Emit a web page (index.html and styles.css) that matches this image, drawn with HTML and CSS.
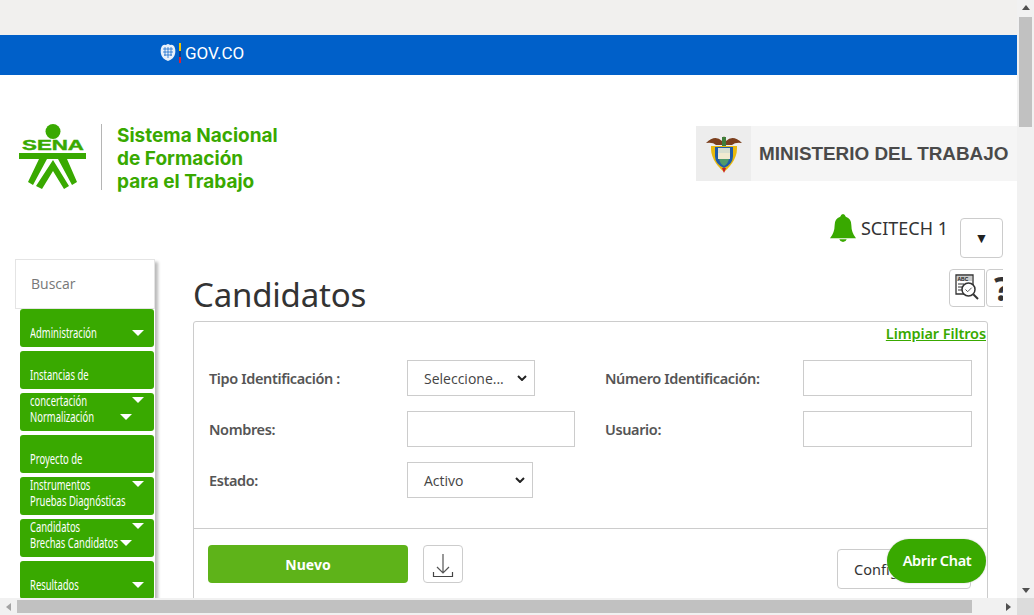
FILE: index.html
```html
<!DOCTYPE html>
<html lang="es">
<head>
<meta charset="utf-8">
<title>Candidatos</title>
<link rel="stylesheet" href="styles.css">
</head>
<body>
<div class="viewport">
  <div class="topstrip"></div>
  <header class="govbar">
    <svg class="shield" width="16" height="20" viewBox="0 0 16 20"><path d="M2 3q2-2 4-1 2-2 4 0 2-1 4 1 2 3 1 8-1 5-7 7-6-2-7-7-1-5 1-8z" fill="#e8f0fa"/><path d="M3 6h10M3 9h10M4 12h8M8 4v11M5 4v9M11 4v9" stroke="#0060c9" stroke-width=".7" fill="none"/></svg>
    <span class="flag"></span>
    <span class="govtext">GOV.CO</span>
  </header>
  <section class="brand">
    <div class="sena">
      <svg class="sena-logo" width="68" height="68" viewBox="0 0 68 68">
        <circle cx="34" cy="7.500" r="7.500" fill="#39a900"/>
        <text x="3" y="26" class="sena-word" textLength="62" lengthAdjust="spacingAndGlyphs">SENA</text>
        <rect x="0" y="29" width="67" height="6" fill="#39a900"/>
        <path d="M20 35h8L14 61l-5-3zM39 35h9l10 23-5 3zM34 36l16 26-5 3-11-18-11 18-6-3z" fill="#39a900"/>
      </svg>
      <span class="rule"></span>
      <div class="sena-name">Sistema Nacional<br>de Formación<br>para el Trabajo</div>
    </div>
    <div class="ministry">
      <span class="crest">
        <svg width="38" height="40" viewBox="0 0 38 40">
          <path d="M1 9Q10 0 17 7L19 2l2 5Q28 0 37 9q-7-1-10 2H11Q8 8 1 9z" fill="#7b3f1d"/>
          <path d="M17 3h4v9h-4z" fill="#3f7d3a"/>
          <path d="M6 12h26q1 14-13 26Q5 26 6 12z" fill="#e8b90c"/>
          <path d="M10 13h18v9q0 8-9 12-9-4-9-12z" fill="#1e5ba8"/>
          <path d="M13 14h12v5H13z" fill="#d8dfd0"/>
          <path d="M13 19h12v6H13z" fill="#f1ead0"/>
          <path d="M14 25h10q-1 5-5 7-4-2-5-7z" fill="#4f9a6a"/>
          <path d="M17 34h4l-2 5z" fill="#c81e2d"/>
        </svg>
      </span>
      <span class="ministry-name">MINISTERIO DEL TRABAJO</span>
    </div>
  </section>
  <div class="userbar">
    <svg class="bell" width="26" height="30" viewBox="0 0 28 30"><path d="M14 0q2 0 3 3 6 2 6 9 0 8 5 14H0q5-6 5-14 0-7 6-9 1-3 3-3zM10 27h8q-1 3-4 3t-4-3z" fill="#39a900"/></svg>
    <span class="username">SCITECH 1</span>
    <button class="caret-btn">▼</button>
  </div>
  <div class="main">
    <nav class="side">
      <div class="search">Buscar</div>
      <ul class="menu">
        <li class="item low"><span class="lab">Administración</span><i class="tri"></i></li>
        <li class="item low"><span class="lab">Instancias de</span></li>
        <li class="item two"><span class="lab">concertación<br>Normalización</span><i class="tri"></i><i class="tri second"></i></li>
        <li class="item low"><span class="lab">Proyecto de</span></li>
        <li class="item two"><span class="lab">Instrumentos<br>Pruebas Diagnósticas</span><i class="tri"></i></li>
        <li class="item two"><span class="lab">Candidatos<br>Brechas Candidatos</span><i class="tri"></i><i class="tri second"></i></li>
        <li class="item low"><span class="lab">Resultados</span><i class="tri"></i></li>
      </ul>
    </nav>
    <main class="content">
      <div class="titlerow">
        <h1>Candidatos</h1>
        <div class="tools">
          <button class="tool">
            <svg width="28" height="28" viewBox="0 0 28 28"><path d="M3 2h17v19H3z" fill="#fff" stroke="#333" stroke-width="1.300"/><path d="M4 3h15v5H4z" fill="#ccc"/><text x="4.500" y="8" class="abc">ABC</text><path d="M5 11h6M5 14h5M5 17h6" stroke="#333" stroke-width="1.200"/><circle cx="15.500" cy="16.500" r="6.500" fill="#fff" stroke="#333" stroke-width="1.500"/><path d="M12.500 16.500l2.200 2.200 4-4" fill="none" stroke="#555"/><path d="M20.500 21.500l4.500 4.500" stroke="#333" stroke-width="2"/></svg>
          </button>
          <button class="tool help"><span>?</span></button>
        </div>
      </div>
      <section class="panel">
        <a class="clear">Limpiar Filtros</a>
        <form class="filters">
          <label class="lbl">Tipo Identificación :</label>
          <div class="select w128"><span>Seleccione...</span><svg width="10" height="6" viewBox="0 0 10 6"><path d="M1 1l4 4 4-4" fill="none" stroke="#222" stroke-width="2"/></svg></div>
          <label class="lbl">Número Identificación:</label>
          <div class="input w169"></div>
          <label class="lbl">Nombres:</label>
          <div class="input w168"></div>
          <label class="lbl">Usuario:</label>
          <div class="input w169"></div>
          <label class="lbl">Estado:</label>
          <div class="select w126"><span>Activo</span><svg width="10" height="6" viewBox="0 0 10 6"><path d="M1 1l4 4 4-4" fill="none" stroke="#222" stroke-width="2"/></svg></div>
        </form>
        <div class="actions">
          <button class="nuevo">Nuevo</button>
          <button class="download">
            <svg width="22" height="26" viewBox="0 0 22 26"><path d="M11 1v19M5 14l6 6 6-6" fill="none" stroke="#555" stroke-width="1.200"/><path d="M1.500 19v4.500h19V19" fill="none" stroke="#444" stroke-width="1.200"/></svg>
          </button>
          <button class="config">Configurar</button>
        </div>
      </section>
    </main>
  </div>
  <button class="chat">Abrir Chat</button>
  <div class="vscroll">
    <svg class="arrow" width="8" height="5" viewBox="0 0 8 5"><path d="M0 5h8L4 0z" fill="#505050"/></svg>
    <span class="vthumb"></span>
    <svg class="arrow bottom" width="8" height="5" viewBox="0 0 8 5"><path d="M0 0h8L4 5z" fill="#505050"/></svg>
  </div>
  <div class="hscroll">
    <svg class="harrow" width="5" height="8" viewBox="0 0 5 8"><path d="M5 0v8L0 4z" fill="#a3a3a3"/></svg>
    <span class="hthumb"></span>
    <svg class="harrow" width="5" height="8" viewBox="0 0 5 8"><path d="M0 0v8l5-4z" fill="#505050"/></svg>
  </div>
  <div class="corner"></div>
</div>
</body>
</html>
```
FILE: styles.css
```css
* { box-sizing: border-box; }
html, body { margin: 0; height: 100%; overflow: hidden; background: #fff; }
.viewport { position: relative; width: 1034px; height: 615px; overflow: hidden; font-family: "Open Sans", "Noto Sans", sans-serif; color: #333; }
.topstrip { height: 35px; background: #f1f0ee; }
.govbar { height: 40px; background: #0060c9; display: flex; align-items: center; padding: 0 0 4px 160px; }
.shield { margin-right: 3px; }
.flag { width: 2px; height: 20px; margin-right: 4px; background: linear-gradient(#f4c400 0 40%, #0b3f8c 40% 70%, #d6213a 70%); }
.govtext { color: #fff; font: 400 17px "Roboto", sans-serif; }
.brand { height: 125px; padding: 49px 17px 0 19px; display: flex; justify-content: space-between; align-items: flex-start; }
.sena { display: flex; align-items: flex-start; }
.sena-word { font: 900 14px "Liberation Sans", sans-serif; fill: #39a900; stroke: #39a900; stroke-width: .4px; }
.rule { width: 1px; height: 66px; margin: 0 15px 0 14px; background: #b5b5b5; }
.sena-name { color: #39a900; font: 700 19px/23px "Inter", sans-serif; }
.ministry { width: 321px; height: 55px; margin-top: 2px; background: #f5f5f5; display: flex; align-items: center; }
.crest { width: 55px; height: 55px; background: #ededed; display: flex; align-items: center; justify-content: center; }
.ministry-name { margin-left: 8px; color: #4a4a4a; font: 700 18.900px "Liberation Sans", sans-serif; white-space: nowrap; }
.userbar { height: 59px; display: flex; align-items: flex-start; justify-content: flex-end; padding: 13px 31px 0 0; }
.bell { margin-right: 5px; }
.username { font: 400 18px/30px "Noto Sans", sans-serif; color: #333; }
.caret-btn { width: 43px; height: 40px; margin: 5px 0 0 12px; border: 1px solid #ccc; border-radius: 4px; background: #fff; font-size: 14px; color: #222; padding: 0; }
.main { display: flex; height: 356px; }
.side { width: 140px; margin-left: 15px; box-shadow: 3px 3px 3px #bbb; flex: none; }
.search { height: 50px; padding: 14px 0 0 15px; border: 1px solid #e4e4e4; font-size: 14px; color: #777; background: #fff; }
.menu { list-style: none; margin: 0 1px 0 5px; padding: 0; display: flex; flex-direction: column; gap: 4px; }
.item { position: relative; height: 38px; background: #39a900; border-radius: 3px; color: #fff; font: 400 15px/16px "Noto Sans", sans-serif; padding-left: 10px; }
.lab { display: block; white-space: nowrap; transform: scaleX(.63); transform-origin: left center; }
.low { padding-top: 15px; }
.two { overflow: hidden; }
.two .lab { margin-top: -1px; }
.tri { position: absolute; right: 10px; top: 21px; border: 6px solid transparent; border-top: 6px solid #fff; border-bottom: 0; }
.two .tri { top: 4px; }
.two .tri.second { top: 21px; right: 22px; }
.content { width: 794px; margin-left: 38px; flex: none; }
.titlerow { height: 62px; display: flex; justify-content: space-between; position: relative; }
h1 { margin: 0; padding-top: 14px; font: 400 33px/44px "Noto Sans", sans-serif; letter-spacing: -.2px; color: #333; }
.tools { display: flex; position: absolute; left: 756px; top: 10px; width: 54px; height: 38px; overflow: hidden; }
.tool { flex: none; width: 36px; height: 38px; background: #fff; border: 1px solid #ccc; border-radius: 4px 0 0 4px; padding: 2px; }
.help { width: 40px; margin-left: 1px; font: 700 34px/34px "Noto Sans", sans-serif; color: #333; text-align: left; padding: 0 0 0 7px; border-radius: 4px; }
.panel { position: relative; width: 795px; height: 290px; border: 1px solid #ccc; border-radius: 3px 3px 0 0; }
.clear { position: absolute; right: 1px; top: 1px; color: #39a900; font: 600 14.500px "Noto Sans", sans-serif; letter-spacing: -.1px; text-decoration: underline; }
.filters { display: grid; grid-template-columns: 198px 198px 198px 1fr; grid-auto-rows: 36px; row-gap: 15px; height: 207px; padding: 38px 0 0 15px; border-bottom: 1px solid #ccc; align-items: center; }
.lbl { font: 600 14.500px "Noto Sans", sans-serif; letter-spacing: -.38px; color: #555; }
.select, .input { height: 36px; background: #fff; border: 1px solid #ccc; }
.select { display: flex; align-items: center; justify-content: space-between; padding: 0 7px 0 16px; font-size: 14px; color: #444; }
.w128 { width: 128px; } .w126 { width: 126px; } .w168 { width: 168px; } .w169 { width: 169px; }
.actions { display: flex; align-items: flex-start; padding: 16px 0 0 14px; }
.nuevo { width: 200px; height: 38px; background: #5eb319; color: #fff; border: 0; border-radius: 4px; font: 700 14px "Noto Sans", sans-serif; }
.download { width: 40px; height: 38px; margin-left: 15px; background: #fff; border: 1px solid #ccc; border-radius: 4px; padding: 6px 0 0; }
.config { width: 134px; height: 40px; margin: 4px 16px 0 auto; background: #fff; border: 1px solid #ccc; border-radius: 4px; font: 400 14.500px "Noto Sans", sans-serif; color: #333; text-align: left; padding-left: 16px; }
.chat { position: absolute; left: 887px; top: 539px; width: 99px; height: 44px; border: 0; border-radius: 22px; background: #39a900; color: #fff; font: 600 14.500px "Noto Sans", sans-serif; letter-spacing: -.35px; padding: 0 0 2px 1px; box-shadow: 0 0 2px #ccc; }
.vscroll { position: absolute; right: 0; top: 0; width: 17px; height: 598px; background: #f1f1f1; display: flex; flex-direction: column; align-items: center; }
.arrow { flex: none; margin: 5px 0 7px; }
.arrow.bottom { margin: auto 0 5px; }
.vthumb { width: 13px; height: 110px; background: #c1c1c1; }
.hscroll { position: absolute; left: 0; bottom: 0; width: 1017px; height: 17px; background: #f1f1f1; display: flex; align-items: center; justify-content: space-between; padding: 0 6px; }
.hthumb { position: absolute; left: 17px; top: 2px; width: 955px; height: 13px; background: #c1c1c1; }
.corner { position: absolute; right: 0; bottom: 0; width: 17px; height: 17px; background: #dcdcdc; }
.abc { font: 700 5px "Liberation Sans", sans-serif; fill: #222; }
```
